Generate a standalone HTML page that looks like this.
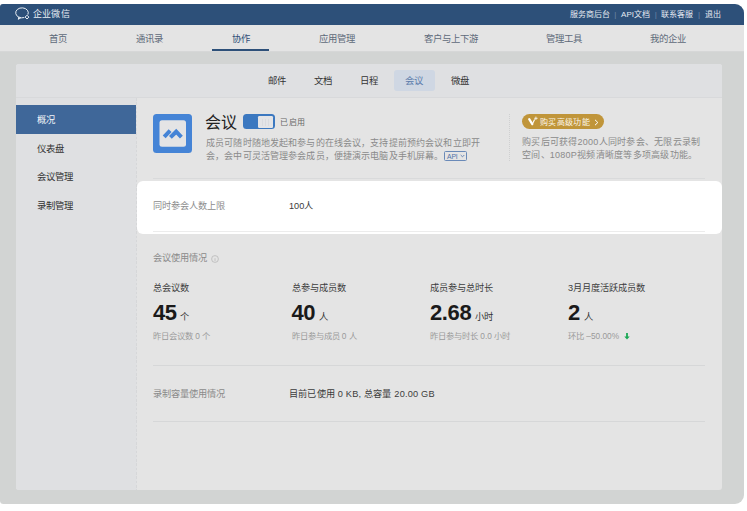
<!DOCTYPE html>
<html lang="zh-CN"><head><meta charset="utf-8">
<style>
*{margin:0;padding:0;box-sizing:border-box}
html,body{width:747px;height:511px;overflow:hidden;background:#fff;font-family:"Liberation Sans",sans-serif}
.a{position:absolute;white-space:nowrap}
#win{position:absolute;left:0;top:4px;width:744px;height:500px;background:#d2d4d3;border-radius:3px 9px 9px 3.5px;overflow:hidden}
#hdr{position:absolute;left:0;top:0;width:744px;height:21px;background:#2d5079}
#nav{position:absolute;left:0;top:21px;width:744px;height:27px;background:#e4e4e4;border-bottom:1px solid #d6d7d7}
.nv{position:absolute;top:0.6px;height:26px;line-height:26px;font-size:9.4px;color:#5e6a7a;transform:translateX(-50%)}
#card{position:absolute;left:16px;top:60px;width:706px;height:426px;background:#e4e4e4;border-radius:3px;overflow:hidden}
#side{position:absolute;left:0;top:34px;width:121px;height:392px;background:#dfe0e2;border-right:1px solid transparent;background-clip:padding-box}
#sline{position:absolute;left:120px;top:34px;width:1px;height:392px;background:repeating-linear-gradient(to bottom,#d6d7d9 0 2.5px,#e0e1e3 2.5px 4.3px)}
.si{position:absolute;left:0;width:120px;height:28.5px;line-height:28.5px;padding:1px 0 0 21px;font-size:9.4px;color:#333}
.tab{position:absolute;top:5.6px;height:21.6px;line-height:21.6px;font-size:9.4px;color:#333;transform:translateX(-50%)}
.num b{font-size:22px;line-height:30px;color:#1a1a1a;font-weight:bold;letter-spacing:-0.4px}
.num i{font-style:normal;font-size:9.3px;color:#333;margin-left:3.8px}
.sub{font-size:8.3px;line-height:12px;color:#9a9a9a}
</style></head><body>
<div id="win">
  <div id="hdr">
    <svg class="a" style="left:14px;top:-1px" width="17" height="17" viewBox="0 0 17 17"><path d="M10.3 14.5A6.3 5 0 1 1 13.9 11.6" fill="none" stroke="#e9eef4" stroke-width="1"/><path d="M4.9 13.8L4.3 16.3L6.9 14.8" fill="none" stroke="#e9eef4" stroke-width="1" stroke-linejoin="round"/><path d="M13 12.2L14.9 14.1L13 16L11.1 14.1Z" fill="none" stroke="#e9eef4" stroke-width="1"/></svg>
    <div class="a" style="left:32.5px;top:0.3px;height:21px;line-height:21px;font-size:9px;letter-spacing:0.4px;color:#e9eef4">企业微信</div>
    <div class="a" style="left:569.6px;top:0;height:21px;line-height:21px;font-size:8px;color:#e6ebf2">服务商后台<span style="color:#6f88a8;margin:0 4.7px">|</span>API文档<span style="color:#6f88a8;margin:0 4.7px">|</span>联系客服<span style="color:#6f88a8;margin:0 4.7px">|</span>退出</div>
  </div>
  <div id="nav">
    <div class="nv" style="left:58px">首页</div>
    <div class="nv" style="left:149.5px">通讯录</div>
    <div class="nv" style="left:241px;color:#2f4f78">协作</div>
    <div class="a" style="left:212px;top:24px;width:57px;height:2px;background:#2d5079"></div>
    <div class="nv" style="left:337px">应用管理</div>
    <div class="nv" style="left:450.5px">客户与上下游</div>
    <div class="nv" style="left:564px">管理工具</div>
    <div class="nv" style="left:668px">我的企业</div>
  </div>
  <div id="card">
    <div class="a" style="left:0;top:0;width:706px;height:33px;background:#dfe0e2"></div><div class="a" style="left:0;top:33px;width:706px;height:1px;background:#d8d9db"></div>
    <div class="tab" style="left:260.5px">邮件</div>
    <div class="tab" style="left:306.5px">文档</div>
    <div class="tab" style="left:352.8px">日程</div>
    <div class="a" style="left:377.8px;top:5.6px;width:41px;height:21.6px;background:#cfd7e3;border-radius:3px"></div>
    <div class="tab" style="left:398px;color:#5b7bab">会议</div>
    <div class="tab" style="left:444px">微盘</div>

    <!-- content area: card-relative coords (card at 16,60 in win; win top 4) => page x-16, page y-64 -->
    <svg class="a" style="left:137px;top:50px" width="39" height="39" viewBox="0 0 39 39">
      <rect x="0" y="0" width="39" height="39" rx="3.5" fill="#4584d6"/>
      <rect x="6.5" y="6.3" width="26.5" height="26.5" rx="2.5" fill="#e4e4e5"/>
      <path d="M11.2 22.8L17.1 16.6" stroke="#4584d6" stroke-width="4" stroke-linecap="butt" fill="none"/>
      <path d="M17.4 23.4L23.2 17.7L28.4 23.1" stroke="#4584d6" stroke-width="4" stroke-linecap="butt" stroke-linejoin="miter" fill="none"/>
    </svg>
    <div class="a" style="left:189px;top:49px;font-size:16px;line-height:20px;color:#222">会议</div>
    <div class="a" style="left:227px;top:50.3px;width:31.6px;height:15px;background:#3b78c0;border-radius:3.5px"></div>
    <div class="a" style="left:241.8px;top:52px;width:15px;height:11.8px;background:#e3e4e7;border-radius:1.2px"></div><div class="a" style="left:245.5px;top:54.5px;width:7px;height:7px;border-left:1px solid #d9dbdf;border-right:1px solid #d9dbdf"></div><div class="a" style="left:248.8px;top:54.5px;width:1px;height:7px;background:#d9dbdf"></div>
    <div class="a" style="left:264.4px;top:53px;font-size:8px;letter-spacing:0.2px;line-height:12px;color:#666">已启用</div>
    <div class="a" style="left:190px;top:72.5px;font-size:9px;letter-spacing:0.13px;line-height:13px;color:#8a8a8a">成员可随时随地发起和参与的在线会议，支持提前预约会议和立即开<br>会，会中可灵活管理参会成员，便捷演示电脑及手机屏幕。</div>
    <div class="a" style="left:428.4px;top:87.2px;width:22.2px;height:9.5px;border:1px solid #6a8ab8;border-radius:1.5px"></div><div class="a" style="left:431px;top:87.6px;font-size:6.8px;line-height:9px;color:#4f73a8;letter-spacing:-0.1px">API</div><svg class="a" style="left:443.5px;top:90px" width="5" height="4" viewBox="0 0 5 4"><path d="M.7 1L2.5 2.8L4.3 1" stroke="#5a7db0" stroke-width=".9" fill="none"/></svg>
    <div class="a" style="left:493px;top:50px;width:0;height:47px;border-left:1px dotted #cfd0d1"></div>
    <div class="a" style="left:506px;top:50px;width:81.6px;height:15.4px;background:#c0953a;border-radius:8px"></div>
    <div class="a" style="left:523.8px;top:50.8px;font-size:8px;letter-spacing:0.4px;line-height:15.4px;color:#fbf5e8">购买高级功能</div>
    <svg class="a" style="left:511px;top:52px" width="12" height="10" viewBox="0 0 12 10"><path d="M2.2 3.2L5.3 8.2" stroke="#fff" stroke-width="2.2" stroke-linecap="round" fill="none"/><path d="M5.3 8.2L7.6 3.4" stroke="#fff" stroke-width="1.1" fill="none"/><path d="M8.9 0.6v3.4M7.2 2.3h3.4" stroke="#fff" stroke-width=".8"/></svg>
    <svg class="a" style="left:578px;top:54.5px" width="5" height="7" viewBox="0 0 5 7"><path d="M1 .8L3.8 3.5L1 6.2" stroke="#fff" stroke-width="1" fill="none"/></svg>
    <div class="a" style="left:506px;top:72px;font-size:9px;letter-spacing:0.26px;line-height:13px;color:#8a8a8a">购买后可获得2000人同时参会、无限云录制<br>空间、1080P视频清晰度等多项高级功能。</div>
    <div class="a" style="left:137px;top:114px;width:552px;height:1px;background:#d9dadb"></div>

    <div class="a" style="left:137px;top:188.2px;font-size:9.2px;line-height:13px;color:#8a8a8a">会议使用情况</div>
    <svg class="a" style="left:195px;top:190.7px" width="8" height="8" viewBox="0 0 8 8"><circle cx="4" cy="4" r="3.4" stroke="#b8b8b8" stroke-width=".8" fill="none"/><path d="M4 3.3v2.6" stroke="#b8b8b8" stroke-width=".8"/></svg>
    <div class="a" style="left:137px;top:218px;font-size:9.2px;line-height:13px;color:#3d3d3d">总会议数</div>
    <div class="a" style="left:275.5px;top:218px;font-size:9.2px;line-height:13px;color:#3d3d3d">总参与成员数</div>
    <div class="a" style="left:414px;top:218px;font-size:9.2px;line-height:13px;color:#3d3d3d">成员参与总时长</div>
    <div class="a" style="left:552px;top:218px;font-size:9.2px;line-height:13px;color:#3d3d3d">3月月度活跃成员数</div>
    <div class="a num" style="left:137px;top:234px"><b>45</b><i>个</i></div>
    <div class="a num" style="left:275.5px;top:234px"><b>40</b><i>人</i></div>
    <div class="a num" style="left:414px;top:234px"><b>2.68</b><i>小时</i></div>
    <div class="a num" style="left:552px;top:234px"><b>2</b><i>人</i></div>
    <div class="a sub" style="left:137px;top:266px">昨日会议数 0 个</div>
    <div class="a sub" style="left:275.5px;top:266px">昨日参与成员 0 人</div>
    <div class="a sub" style="left:414px;top:266px">昨日参与时长 0.0 小时</div>
    <div class="a sub" style="left:552px;top:266px">环比 &ndash;50.00%</div>
    <svg class="a" style="left:608px;top:268.8px" width="6" height="7" viewBox="0 0 6 7"><path d="M3 0v4" stroke="#1aa855" stroke-width="1.8"/><path d="M0.3 3.4L3 6.6L5.7 3.4z" fill="#1aa855"/></svg>
    <div class="a" style="left:137px;top:301.2px;width:552px;height:1px;background:#d6d7d8"></div>
    <div class="a" style="left:137px;top:324px;font-size:9.2px;line-height:13px;color:#8a8a8a">录制容量使用情况</div>
    <div class="a" style="left:273px;top:324px;font-size:9.2px;line-height:13px;color:#3c3c3c;letter-spacing:0.2px">目前已使用 0 KB, 总容量 20.00 GB</div>
    <div class="a" style="left:137px;top:357px;width:552px;height:1px;background:#d6d7d8"></div>

    <!-- highlight -->
    <div class="a" style="left:121px;top:117px;width:585px;height:53px;background:#fff;border-radius:6px"></div>
    <div class="a" style="left:137px;top:136px;font-size:9.15px;line-height:13px;color:#8c8c8c">同时参会人数上限</div>
    <div class="a" style="left:273px;top:136px;font-size:9.15px;line-height:13px;color:#3a3a3a">100人</div>
    <div class="a" style="left:137px;top:167px;width:552px;height:1px;background:#ececec"></div>
    <div id="side">
      <div class="si" style="top:7px;background:#3f6799;color:#f4f6f9;padding-top:0.5px;padding-left:20.5px">概况</div>
      <div class="si" style="top:35.5px">仪表盘</div>
      <div class="si" style="top:64px">会议管理</div>
      <div class="si" style="top:92.5px">录制管理</div>
    </div>
    <div id="sline"></div>
  </div>
</div>
</body></html>
